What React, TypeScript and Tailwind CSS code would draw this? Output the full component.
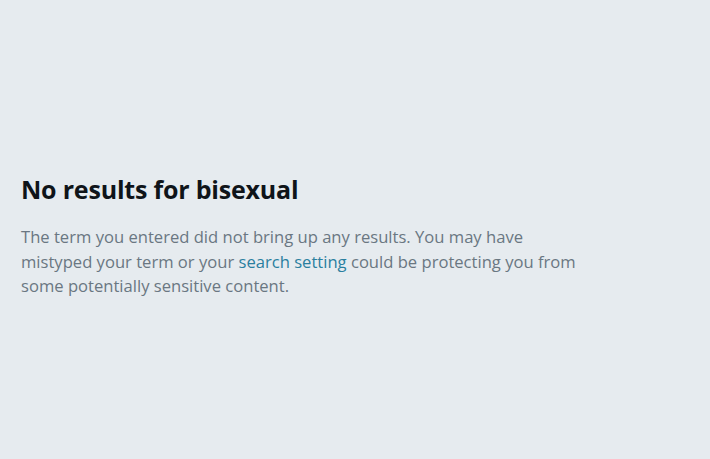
export default function App() {
  return (
    <div
      className="w-[710px] h-[459px] bg-[#e6ebef] flex flex-col pl-[21px] pt-[174px]"
      style={{ fontFamily: '"Open Sans", "Noto Sans", sans-serif' }}
    >
      <h1 className="text-[25px] font-bold text-[#0f1419] leading-[30px] tracking-[-0.2px]">
        No results for bisexual
      </h1>
      <p className="mt-[21px] w-[600px] text-[16.6px] leading-[24.5px] text-[#6a7782]">
        The term you entered did not bring up any results. You may have
        <br />
        mistyped your term or your{" "}
        <a className="text-[#2a7f9f]">search setting</a> could be protecting you from
        <br />
        some potentially sensitive content.
      </p>
    </div>
  );
}
